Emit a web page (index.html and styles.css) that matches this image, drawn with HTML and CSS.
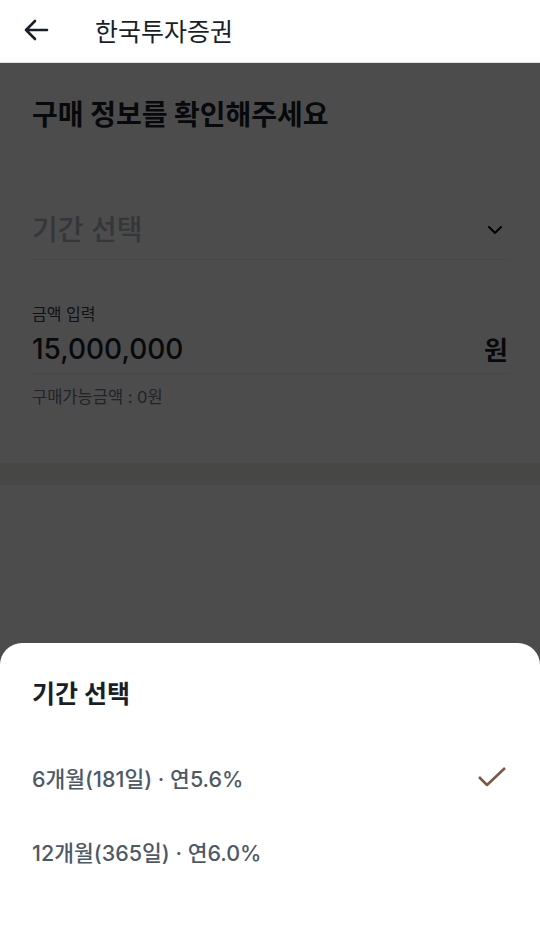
FILE: index.html
```html
<!DOCTYPE html>
<html lang="ko">
<head>
<meta charset="utf-8">
<link rel="stylesheet" href="styles.css">
</head>
<body>
<header class="topbar">
  <svg class="back" width="28" height="28" viewBox="0 0 28 28"><path d="M25 14H4M13 5L4 14l9 9" fill="none" stroke="#191f28" stroke-width="2.6" stroke-linecap="round" stroke-linejoin="round"/></svg>
  <span class="topbar-title">한국투자증권</span>
</header>
<main class="page">
  <h1 class="title">구매 정보를 확인해주세요</h1>
  <div class="field select">
    <span class="placeholder">기간 선택</span>
    <svg width="20" height="20" viewBox="0 0 20 20"><path d="M4 7l6 6 6-6" fill="none" stroke="#000" stroke-width="2" stroke-linecap="round" stroke-linejoin="round"/></svg>
  </div>
  <div class="amount">
    <div class="label">금액 입력</div>
    <div class="field amount-row">
      <span class="value">15,000,000</span>
      <span class="unit">원</span>
    </div>
    <div class="hint">구매가능금액 : 0원</div>
  </div>
</main>
<div class="band"></div>
<div class="overlay"></div>
<section class="sheet">
  <h2 class="sheet-title">기간 선택</h2>
  <ul class="options">
    <li class="option">
      <span>6개월(181일) · 연5.6%</span>
      <svg width="32" height="24" viewBox="0 0 32 24"><path d="M3 12l8 8L29 3" fill="none" stroke="#7a5a42" stroke-width="2.6" stroke-linejoin="round"/></svg>
    </li>
    <li class="option"><span>12개월(365일) · 연6.0%</span></li>
  </ul>
</section>
</body>
</html>
```
FILE: styles.css
```css
* { box-sizing: border-box; }
html, body { margin: 0; padding: 0; }
body {
  width: 540px;
  height: 942px;
  position: relative;
  overflow: hidden;
  background: #fff;
  font-family: Inter, "Noto Sans CJK KR", sans-serif;
  color: #191f28;
}
.topbar {
  height: 63px;
  display: flex;
  align-items: center;
  padding: 0 0 2px 22px;
  border-bottom: 1px solid #e0e0e0;
  background: #fff;
  position: relative;
  z-index: 2;
}
.back { display: block; }
.topbar-title {
  margin-left: 45px;
  font-size: 25px;
  font-weight: 400;
  color: #191f28;
}
.page { padding: 0 32px; }
.title {
  margin: 0;
  padding-top: 33px;
  font-size: 28px;
  line-height: 38px;
  font-weight: 700;
  color: #191f28;
}
.field {
  display: flex;
  align-items: center;
  justify-content: space-between;
  border-bottom: 1px solid #eceef0;
}
.select {
  margin-top: 66px;
  height: 60px;
  padding-bottom: 4px;
}
.select svg { margin-right: 3px; margin-top: 4px; }
.placeholder {
  font-size: 28px;
  font-weight: 500;
  color: #b0b8c1;
}
.amount { padding-top: 44px; }
.label {
  font-size: 16px;
  line-height: 20px;
  color: #333d4b;
}
.amount-row { height: 50px; padding-bottom: 0; }
.value {
  font-size: 28px;
  font-weight: 500;
  color: #191f28;
}
.unit {
  font-size: 26px;
  font-weight: 700;
  color: #191f28;
}
.hint {
  margin-top: 10px;
  font-size: 16.5px;
  color: #6b7684;
}
.band {
  margin-top: 55px;
  height: 22px;
  background: #eef0ea;
}
.overlay {
  position: absolute;
  left: 0; right: 0; top: 63px; bottom: 0;
  background: rgba(0, 0, 0, 0.7);
  z-index: 1;
}
.sheet {
  position: absolute;
  left: 0; right: 0; bottom: 0;
  height: 299px;
  background: #fff;
  border-radius: 22px 22px 0 0;
  z-index: 3;
  padding: 33px 32px 0;
}
.sheet-title {
  margin: 0;
  font-size: 25px;
  line-height: 36px;
  font-weight: 700;
  color: #191f28;
}
.options {
  list-style: none;
  margin: 28px 0 0;
  padding: 0;
}
.option {
  height: 74px;
  display: flex;
  align-items: center;
  justify-content: space-between;
  font-size: 21.5px;
  font-weight: 500;
  color: #4e5968;
}
```
